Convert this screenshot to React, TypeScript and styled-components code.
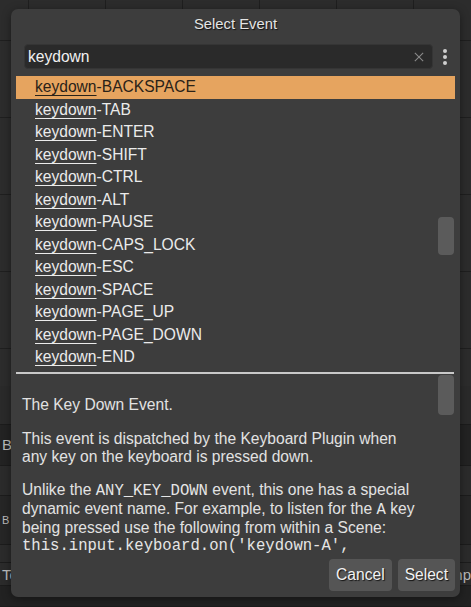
import styled, { createGlobalStyle } from "styled-components";

const GlobalStyle = createGlobalStyle`
  html, body {
    margin: 0;
    padding: 0;
    background: #2b2b2b;
    overflow: hidden;
  }
  body {
    font-family: "Liberation Sans", Arial, sans-serif;
  }
`;

const keys = [
  "BACKSPACE",
  "TAB",
  "ENTER",
  "SHIFT",
  "CTRL",
  "ALT",
  "PAUSE",
  "CAPS_LOCK",
  "ESC",
  "SPACE",
  "PAGE_UP",
  "PAGE_DOWN",
  "END",
];

export default function App() {
  return (
    <>
      <GlobalStyle />
      <Page>
        <Backdrop>
          <GridArea />
          <Band $bg="#2a2a2a" $h={38} />
          <Band $bg="#232323" $h={40}>
            <BackLabel>B</BackLabel>
          </Band>
          <Band $bg="#2b2b2b" $h={30} />
          <Band $bg="#262626" $h={48}>
            <BackLabel $small>B</BackLabel>
          </Band>
          <Band $bg="#2b2b2b" $h={18} />
          <Band $bg="#2b2b2b" $h={22}>
            <BackLabel>Te</BackLabel>
            <BackLabel>np</BackLabel>
          </Band>
          <Band $bg="#222222" $h={20} />
        </Backdrop>

        <Dialog>
          <Title>Select Event</Title>
          <SearchRow>
            <SearchBox>
              <SearchText>keydown</SearchText>
              <ClearIcon viewBox="0 0 12 12">
                <path d="M1 1 L11 11 M11 1 L1 11" stroke="#8a8a8a" strokeWidth="1.3" />
              </ClearIcon>
            </SearchBox>
            <Kebab>
              <Dot />
              <Dot />
              <Dot />
            </Kebab>
          </SearchRow>

          <ListWrap>
            <List>
              {keys.map((k, i) => (
                <Item key={k} $selected={i === 0}>
                  <Match>keydown</Match>-{k}
                </Item>
              ))}
            </List>
            <Thumb $top={141} $h={38} />
          </ListWrap>

          <Divider />

          <Description>
            <Para>The Key Down Event.</Para>
            <Para>
              This event is dispatched by the Keyboard Plugin when any key on
              the keyboard is pressed down.
            </Para>
            <Para>
              Unlike the <Code>ANY_KEY_DOWN</Code> event, this one has a special
              dynamic event name. For example, to listen for the <Code>A</Code>{" "}
              key being pressed use the following from within a Scene:{" "}
              <Code>this.input.keyboard.on('keydown-A',</Code>
            </Para>
            <Thumb $top={1} $h={40} />
          </Description>

          <Footer>
            <Button>Cancel</Button>
            <Button>Select</Button>
          </Footer>
        </Dialog>
      </Page>
    </>
  );
}

const Page = styled.div`
  position: relative;
  width: 471px;
  height: 607px;
  overflow: hidden;
`;

const Backdrop = styled.div`
  display: flex;
  flex-direction: column;
  height: 100%;
`;

const GridArea = styled.div`
  height: 391px;
  background-color: #2c2c2c;
  background-image: linear-gradient(#1f1f1f 1px, transparent 1px),
    linear-gradient(90deg, #1f1f1f 1px, transparent 1px);
  background-size: 77px 77px;
  background-position: 28px 40px;
`;

const Band = styled.div<{ $bg: string; $h: number }>`
  height: ${(p) => p.$h}px;
  background: ${(p) => p.$bg};
  border-bottom: 1px solid #1c1c1c;
  display: flex;
  align-items: center;
  justify-content: space-between;
  padding: 0 0 0 2px;
`;

const BackLabel = styled.span<{ $small?: boolean }>`
  color: #bcbcbc;
  font-size: ${(p) => (p.$small ? 11 : 15)}px;
`;

const Dialog = styled.div`
  position: absolute;
  left: 11px;
  top: 9px;
  width: 449px;
  height: 588px;
  background: #3d3d3d;
  border-radius: 7px;
  box-shadow: 0 2px 10px rgba(0, 0, 0, 0.4);
  display: flex;
  flex-direction: column;
  box-sizing: border-box;
  padding: 0 5px 6px 5px;
`;

const Title = styled.div`
  height: 30px;
  display: flex;
  align-items: center;
  justify-content: center;
  font-size: 14.8px;
  color: #e4e4e4;
  text-shadow: 1px 1px 1px rgba(0, 0, 0, 0.7);
`;

const SearchRow = styled.div`
  display: flex;
  align-items: center;
  gap: 10px;
  margin-top: 5px;
  padding-left: 8px;
`;

const SearchBox = styled.div`
  width: 409px;
  height: 25px;
  box-sizing: border-box;
  background: #2a2a2a;
  border: 1px solid #353535;
  border-radius: 4px;
  display: flex;
  align-items: center;
  justify-content: space-between;
  padding: 0 8px 0 3px;
`;

const SearchText = styled.span`
  color: #f0f0f0;
  font-size: 15.6px;
`;

const ClearIcon = styled.svg`
  width: 10px;
  height: 10px;
`;

const Kebab = styled.div`
  display: flex;
  flex-direction: column;
  gap: 2px;
  padding-top: 1px;
`;

const Dot = styled.span`
  width: 4px;
  height: 4px;
  border-radius: 50%;
  background: #cfcfcf;
`;

const ListWrap = styled.div`
  position: relative;
  margin-top: 7px;
  height: 296px;
  overflow: hidden;
`;

const List = styled.div`
  display: flex;
  flex-direction: column;
`;

const Item = styled.div<{ $selected?: boolean }>`
  height: 22.5px;
  flex-shrink: 0;
  display: flex;
  align-items: center;
  padding-left: 19px;
  font-size: 15.6px;
  color: ${(p) => (p.$selected ? "#2a2218" : "#ebebeb")};
  background: ${(p) => (p.$selected ? "#e6a45f" : "transparent")};
  white-space: pre;
`;

const Match = styled.span`
  text-decoration: underline;
  text-underline-offset: 3px;
  text-decoration-thickness: 1px;
`;

const Thumb = styled.div<{ $top: number; $h: number }>`
  position: absolute;
  right: 1px;
  top: ${(p) => p.$top}px;
  width: 16px;
  height: ${(p) => p.$h}px;
  border-radius: 4px;
  background: #5b5b5b;
`;

const Divider = styled.div`
  height: 2px;
  margin-right: 1px;
  background: #c9c9c9;
`;

const Description = styled.div`
  position: relative;
  flex: 1;
  overflow: hidden;
  padding: 22px 30px 0 6px;
  color: #e2e2e2;
  font-size: 15.6px;
  line-height: 17.8px;
`;

const Para = styled.p`
  margin: 0 0 16px 0;
`;

const Code = styled.span`
  font-family: "Liberation Mono", "Courier New", monospace;
  font-size: 15.6px;
  line-height: 1;
  color: #e6e6e6;
`;

const Footer = styled.div`
  display: flex;
  justify-content: flex-end;
  gap: 6px;
  padding-top: 4px;
`;

const Button = styled.div`
  height: 32px;
  padding: 0 7px;
  display: flex;
  align-items: center;
  border-radius: 4px;
  background: #555555;
  color: #f2f2f2;
  font-size: 15.6px;
  text-shadow: 1px 1px 1px rgba(0, 0, 0, 0.8);
`;
